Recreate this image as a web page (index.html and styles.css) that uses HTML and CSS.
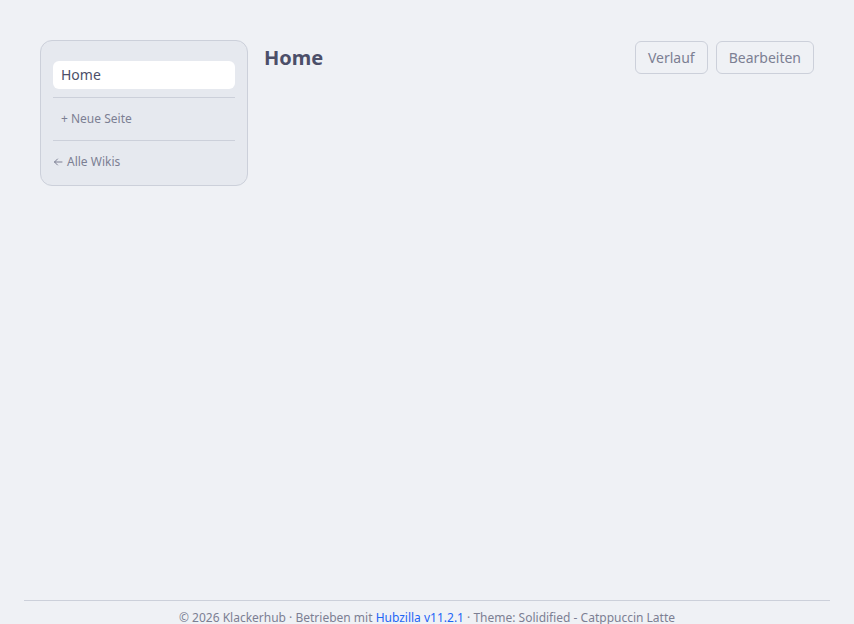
FILE: index.html
```html
<!DOCTYPE html>
<html lang="de">
  <head>
    <meta charset="UTF-8" />
    <meta name="viewport" content="width=device-width, initial-scale=1.0" />
    <title>Home - Wiki</title>
    <link rel="stylesheet" href="styles.css">
  </head>
  <body>
    <div class="page">
      <main class="wiki">
        <!-- Page list -->
        <aside class="wiki-nav">
          <a class="nav-item active" href="#">Home</a>
          <hr class="nav-divider" />
          <a class="nav-item small" href="#">+ Neue Seite</a>
          <hr class="nav-divider" />
          <a class="nav-back" href="#">
            <svg class="back-icon" viewBox="0 0 10 10" width="10" height="10" aria-hidden="true">
              <path d="M9 5H1.5M4.5 2 1.5 5l3 3" fill="none" stroke="currentColor" stroke-width="1" stroke-linecap="round" stroke-linejoin="round" />
            </svg>
            Alle Wikis
          </a>
        </aside>

        <!-- Page content -->
        <section class="wiki-page">
          <div class="page-header">
            <h1>Home</h1>
            <div class="page-actions">
              <button type="button" class="btn">Verlauf</button>
              <button type="button" class="btn">Bearbeiten</button>
            </div>
          </div>
        </section>
      </main>

      <footer class="site-footer">
        &copy; 2026 Klackerhub &middot; Betrieben mit <a href="#">Hubzilla v11.2.1</a> &middot; Theme: Solidified - Catppuccin Latte
      </footer>
    </div>
  </body>
</html>
```

FILE: styles.css
```css
/* Catppuccin Latte */
body {
  margin: 0;
  padding: 0;
  font-family: "Noto Sans", "Open Sans", sans-serif;
  background-color: #eff1f5;
  color: #4c4f69;
}

.page {
  display: flex;
  flex-direction: column;
}

.wiki {
  box-sizing: border-box;
  min-height: 600px;
  display: flex;
  align-items: flex-start;
  gap: 16px;
  padding: 40px 40px;
}

/* Sidebar */
.wiki-nav {
  box-sizing: border-box;
  width: 208px;
  flex-shrink: 0;
  display: flex;
  flex-direction: column;
  background-color: #e6e9ef;
  border: 1px solid #ccd0da;
  border-radius: 12px;
  padding: 20px 12px 10px;
}

.nav-item {
  display: block;
  padding: 4px 8px;
  font-size: 14px;
  line-height: 20px;
  color: #4c4f69;
  text-decoration: none;
  border-radius: 6px;
}

.nav-item.active {
  background-color: #fff;
}

.nav-item.small {
  font-size: 12px;
  line-height: 18px;
  color: #7c7f93;
}

.nav-divider {
  border: none;
  border-top: 1px solid #ccd0da;
  margin: 8px 0;
}

.nav-back {
  display: flex;
  align-items: center;
  gap: 4px;
  padding: 4px 0;
  font-size: 12px;
  line-height: 18px;
  color: #7c7f93;
  text-decoration: none;
}

.back-icon {
  flex-shrink: 0;
}

/* Main content */
.wiki-page {
  flex: 1;
  padding-top: 1px;
}

.page-header {
  display: flex;
  justify-content: space-between;
  align-items: center;
}

.page-header h1 {
  margin: 0;
  font-size: 20px;
  font-weight: 700;
  color: #4c4f69;
}

.page-actions {
  display: flex;
  gap: 8px;
}

.btn {
  font-family: "Noto Sans", "Open Sans", sans-serif;
  font-size: 14px;
  line-height: 19px;
  padding: 6px 12px;
  background-color: transparent;
  color: #7c7f93;
  border: 1px solid #ccd0da;
  border-radius: 6px;
  cursor: pointer;
}

.btn:hover {
  background-color: #e6e9ef;
}

/* Footer */
.site-footer {
  margin: 0 24px;
  border-top: 1px solid #ccd0da;
  padding: 8px 0 12px;
  text-align: center;
  font-size: 12px;
  line-height: 17px;
  color: #7c7f93;
}

.site-footer a {
  color: #1e66f5;
  text-decoration: none;
}
```
